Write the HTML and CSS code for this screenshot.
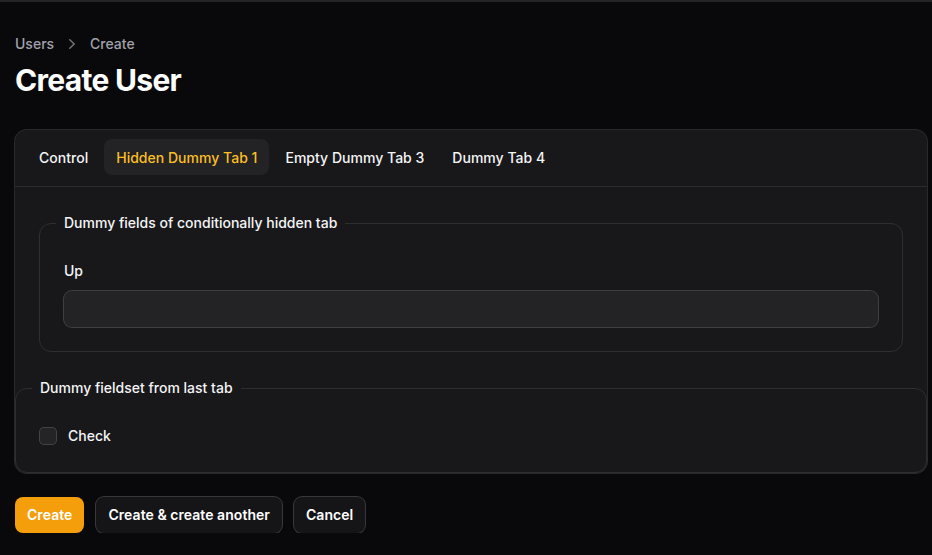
FILE: index.html
```html
<!DOCTYPE html>
<html lang="en">
<head>
<meta charset="utf-8">
<title>Create User</title>
<link rel="stylesheet" href="styles.css">
</head>
<body>
<div class="topbar"></div>
<main class="page">
  <header class="header">
    <nav class="breadcrumbs">
      <span class="crumb">Users</span>
      <svg class="chevron" viewBox="0 0 20 20" fill="currentColor" aria-hidden="true"><path fill-rule="evenodd" d="M7.21 14.77a.75.75 0 01.02-1.06L11.168 10 7.23 6.29a.75.75 0 111.04-1.08l4.5 4.25a.75.75 0 010 1.08l-4.5 4.25a.75.75 0 01-1.06-.02z" clip-rule="evenodd"/></svg>
      <span class="crumb">Create</span>
    </nav>
    <h1 class="title">Create User</h1>
  </header>

  <form class="form">
    <section class="card">
      <nav class="tabs">
        <span class="tab">Control</span>
        <span class="tab tab-active">Hidden Dummy Tab 1</span>
        <span class="tab">Empty Dummy Tab 3</span>
        <span class="tab">Dummy Tab 4</span>
      </nav>
      <div class="panel">
        <fieldset class="fieldset">
          <legend class="legend">Dummy fields of conditionally hidden tab</legend>
          <div class="field">
            <label class="label">Up</label>
            <div class="input"></div>
          </div>
        </fieldset>
      </div>
      <fieldset class="fieldset fieldset-outer">
        <legend class="legend">Dummy fieldset from last tab</legend>
        <label class="check">
          <span class="checkbox"></span>
          <span class="label">Check</span>
        </label>
      </fieldset>
    </section>

    <div class="actions">
      <button type="button" class="btn btn-primary">Create</button>
      <button type="button" class="btn btn-gray">Create &amp; create another</button>
      <button type="button" class="btn btn-gray">Cancel</button>
    </div>
  </form>
</main>
</body>
</html>
```

FILE: styles.css
```css
* { box-sizing: border-box; }

html, body {
  margin: 0;
  background: #09090b;
  color: #ffffff;
  font-family: Inter, "Noto Sans", "Liberation Sans", sans-serif;
  -webkit-font-smoothing: antialiased;
}

.topbar {
  height: 2px;
  background: #252528;
}

.page {
  padding: 32px 5px 0 15px;
}

.header {
  display: flex;
  flex-direction: column;
  gap: 8px;
}

.breadcrumbs {
  display: flex;
  align-items: center;
  gap: 8px;
  height: 20px;
}

.crumb {
  font-size: 14px;
  line-height: 20px;
  font-weight: 500;
  color: #a1a1aa;
}

.chevron {
  width: 20px;
  height: 20px;
  color: #71717a;
}

.title {
  margin: 0;
  font-size: 30px;
  line-height: 36px;
  font-weight: 700;
  letter-spacing: -0.7px;
  color: #ffffff;
}

.form {
  margin-top: 32px;
  display: flex;
  flex-direction: column;
  gap: 24px;
}

.card {
  background: #18181b;
  border-radius: 12px;
  box-shadow: 0 0 0 1px #29292c;
}

.tabs {
  display: flex;
  gap: 4px;
  padding: 9px 12px 11px;
  border-bottom: 1px solid #2b2b2e;
}

.tab {
  display: flex;
  align-items: center;
  height: 36px;
  padding: 0 12px;
  border-radius: 8px;
  font-size: 14px;
  font-weight: 500;
  letter-spacing: 0.02px;
  color: #f4f4f5;
}

.tab-active {
  background: #232326;
  color: #fbbf24;
}

.panel {
  padding: 24px;
}

.fieldset {
  margin: 0;
  padding: 24px;
  border: 1px solid #2e2e31;
  border-radius: 12px;
  min-width: 0;
}

.legend {
  margin-left: -8px;
  padding: 0 8px;
  font-size: 14px;
  line-height: 24px;
  font-weight: 500;
  color: #f4f4f5;
}

.field {
  display: flex;
  flex-direction: column;
  gap: 8px;
}

.label {
  font-size: 14px;
  line-height: 24px;
  font-weight: 500;
  color: #f4f4f5;
}

.input {
  height: 36px;
  border-radius: 8px;
  background: #232326;
  box-shadow: 0 0 0 1px #3f3f42;
}

.check {
  display: flex;
  align-items: center;
  gap: 12px;
  height: 24px;
}

.checkbox {
  width: 16px;
  height: 16px;
  border-radius: 4px;
  background: #242427;
  box-shadow: 0 0 0 1px #434346;
}

.actions {
  display: flex;
  gap: 12px;
}

.btn {
  height: 36px;
  padding: 0 12px 1px;
  border: none;
  border-radius: 8px;
  font-family: inherit;
  font-size: 14px;
  font-weight: 600;
  letter-spacing: 0.05px;
  color: #ffffff;
  cursor: pointer;
}

.btn-primary {
  background: #f59e0b;
}

.btn-gray {
  background: #151517;
  box-shadow: 0 0 0 1px #38383b;
}
```
